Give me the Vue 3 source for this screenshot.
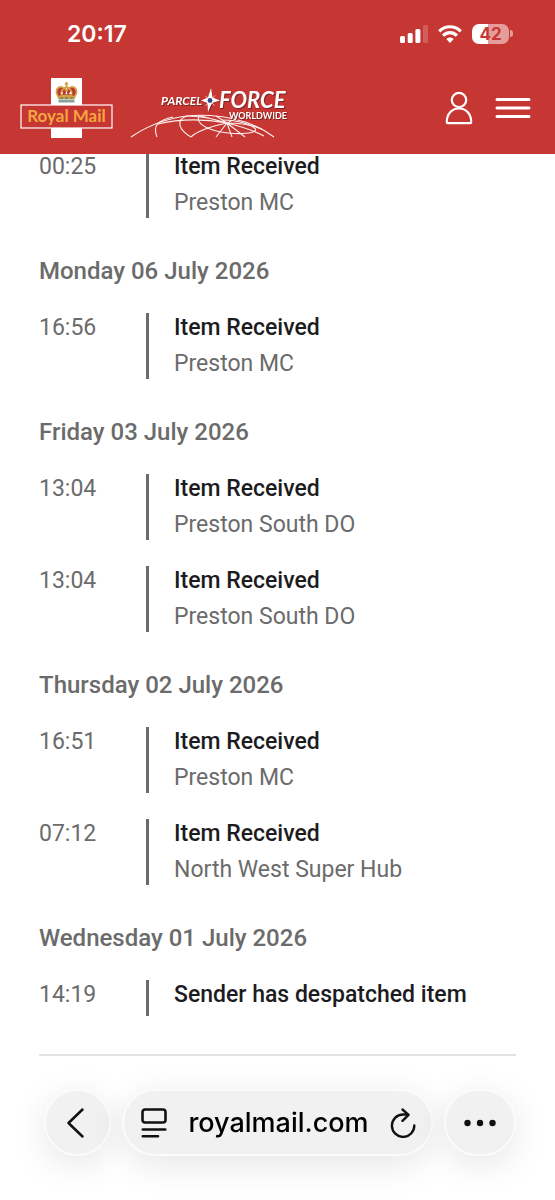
<template>
  <div class="page">
    <header class="header">
      <!-- Status bar -->
      <div class="status">
        <time class="clock">20:17</time>
        <div class="indicators">
          <svg class="signal" width="28" height="20" viewBox="0 0 28 20" fill="#fff" role="img" aria-label="Signal">
            <rect x="0" y="12" width="5" height="7" rx="1.5" />
            <rect x="7.700" y="9" width="5" height="10" rx="1.500" />
            <rect x="15.400" y="5" width="5" height="14" rx="1.500" />
            <rect x="23" y="1" width="5" height="18" rx="1.500" opacity="0.200" />
          </svg>
          <svg class="wifi" width="24" height="20" viewBox="1 0 24 20" fill="none" stroke="#fff" stroke-width="3.200" role="img" aria-label="Wi-Fi">
            <path d="M2.300 7.300C8.200 1.200 17.800 1.200 23.700 7.300" />
            <path d="M6.100 11.600c4-4 9.800-4 13.800 0" />
            <path d="M13 18.900l-3.700-3.800c2-2 5.400-2 7.400 0z" fill="#fff" stroke="none" />
          </svg>
          <div class="battery">
            <span class="battery-body">42</span>
            <span class="battery-tip"></span>
          </div>
        </div>
      </div>

      <!-- Site navigation -->
      <nav class="nav">
        <a class="logo-rm" href="#" aria-label="Royal Mail">
          <svg width="94" height="60" viewBox="0 0 94 60">
            <rect x="31" y="0" width="31" height="60" fill="#fff" />
            <rect x="1" y="27" width="91" height="23" fill="#c63632" stroke="#fff" stroke-width="1.200" />
            <!-- Crown -->
            <path d="M39 21C35 14 37 9 42 9c2 0 3 1 4.500 2C48 10 49 9 51 9c5 0 7 5 3 12z" fill="#b93a35" />
            <path d="M38.500 19C34 12 38 8 42 9q3 1 4.500 4Q48 10 51 9c4-1 8 3 3.500 10M42 18c-2-4 0-7 4.500-9 4.500 2 6.500 5 4.500 9" fill="none" stroke="#d6a044" stroke-width="1.700" />
            <path d="M46.500 4v5M44.800 6h3.400" stroke="#d39a36" stroke-width="1.600" />
            <path d="M38 18q8.500-3 17 0v3H38z" fill="#d6a044" />
            <path d="M38.500 21.500h16v3h-16z" fill="#8aa09a" />
            <path d="M41 16l1-3 1 3zm8 0l1.500-3 1.500 3zm-3.500 0l1-3 1 3z" fill="#fff" />
            <path d="M40 20h3m2 0h3m2 0h3" stroke="#357263" stroke-width="1" />
            <text class="rm-text" x="46.500" y="44" text-anchor="middle">Royal Mail</text>
          </svg>
        </a>
        <a class="logo-pf" href="#" aria-label="Parcelforce Worldwide">
          <svg width="162" height="60" viewBox="0 -4 162 60">
            <g fill="none" stroke="#fff" stroke-width="1.100" opacity="0.920">
              <path d="M3 55C28 38 56 32 82 33.500C108 35 130 43 146 55" />
              <path d="M29 55C24 43 31 38 45 35" />
              <path d="M63 55C51 48 47 38 59 34" />
              <path d="M71 33.500C67 43 83 50 106 51.500C121 52 130 50 127 46.500C121 41 107 38 95 38" />
              <path d="M99 41C77 37 55 36 30 42M99 41C87 37 73 34 58 34M99 41L71 33.500M99 41L88 34M99 41C80 45 68 50 63 55M99 41L88 55M99 41l5 14M99 41l18 14M99 41c16 4 28 8 37 13M99 41C112 41 124 43 134 47M99 41l8-4" />
            </g>
            <g class="pf-shadow">
              <text class="pf-parcel" x="33" y="23">PARCEL</text>
              <text class="pf-force" x="91" y="26">FORCE</text>
              <text class="pf-world" x="101" y="37">WORLDWIDE</text>
            </g>
            <path d="M83 8l2 8 7 3-7 2.500-4 9-1-9-6-2.500 7-3z" fill="#7e2523" />
            <path d="M83 6l1.500 9.500 7.500 3-8 2.500-4 9-.5-9-6.500-2.500 7-3z" fill="#fff" />
            <path d="M77.500 14l3 3M87 13.500l-3 3M77.500 23.500l3-3M86.500 23.500l-3-3" stroke="#fff" stroke-width="0.700" />
            <circle cx="82" cy="18.500" r="2.400" fill="#35458b" />
          </svg>
        </a>
        <div class="nav-actions">
          <button class="icon-btn" type="button" aria-label="Account">
            <svg width="28" height="34" viewBox="0 0 28 34" fill="none" stroke="#fff" stroke-width="2.200">
              <circle cx="14" cy="9" r="7.200" />
              <path d="M1.800 31.500C1.500 23 7 17.500 14 17.500s12.500 5.500 12.200 14q0 .7-.8.700H2.600q-.8 0-.8-.7z" />
            </svg>
          </button>
          <button class="icon-btn" type="button" aria-label="Menu">
            <svg width="36" height="34" viewBox="0 0 36 34" stroke="#fff" stroke-width="3" stroke-linecap="round">
              <path d="M2 8.500h32M2 17h32M2 25.500h32" />
            </svg>
          </button>
        </div>
      </nav>
    </header>

    <!-- Tracking history -->
    <main class="history">
      <section v-for="(day, i) in days" :key="i" class="day">
        <h2 v-if="day.date" class="day-title">{{ day.date }}</h2>
        <ol class="events">
          <li v-for="(event, j) in day.events" :key="j" class="event">
            <time class="event-time">{{ event.time }}</time>
            <div class="event-body">
              <p class="event-title">{{ event.title }}</p>
              <p v-if="event.place" class="event-place">{{ event.place }}</p>
            </div>
          </li>
        </ol>
      </section>
    </main>

    <!-- Browser toolbar -->
    <div class="toolbar">
      <button class="pill" type="button" aria-label="Back">
        <svg width="24" height="32" viewBox="0 0 24 32" fill="none" stroke="#111" stroke-width="2.500" stroke-linecap="round" stroke-linejoin="round">
          <path d="M16.500 2.500L2.500 16l14 13.500" />
        </svg>
      </button>
      <div class="pill address">
        <button class="icon-btn" type="button" aria-label="Page menu">
          <svg width="26" height="30" viewBox="0 0 26 30" fill="none" stroke="#111" stroke-width="2.600" stroke-linecap="round">
            <rect x="1.500" y="1.500" width="23" height="13" rx="2.500" />
            <path d="M1.800 21.500h22.500M1.800 28.300H17" />
          </svg>
        </button>
        <button class="url" type="button">royalmail.com</button>
        <button class="icon-btn" type="button" aria-label="Reload">
          <svg width="26" height="30" viewBox="0 0 26 30" fill="none" stroke="#111" stroke-width="2.400" stroke-linecap="round" stroke-linejoin="round">
            <path d="M24.300 17.500A11.200 11.200 0 1 1 13 6.500h5" />
            <path d="M12.500 1.500l6 5.300-6 6" />
          </svg>
        </button>
      </div>
      <button class="pill" type="button" aria-label="More">
        <svg width="32" height="8" viewBox="0 0 32 8" fill="#111">
          <circle cx="3.500" cy="4" r="3.200" />
          <circle cx="16" cy="4" r="3.200" />
          <circle cx="28.500" cy="4" r="3.200" />
        </svg>
      </button>
    </div>
  </div>
</template>

<script setup>
const days = [
  {
    date: '',
    events: [{ time: '00:25', title: 'Item Received', place: 'Preston MC' }]
  },
  {
    date: 'Monday 06 July 2026',
    events: [{ time: '16:56', title: 'Item Received', place: 'Preston MC' }]
  },
  {
    date: 'Friday 03 July 2026',
    events: [
      { time: '13:04', title: 'Item Received', place: 'Preston South DO' },
      { time: '13:04', title: 'Item Received', place: 'Preston South DO' }
    ]
  },
  {
    date: 'Thursday 02 July 2026',
    events: [
      { time: '16:51', title: 'Item Received', place: 'Preston MC' },
      { time: '07:12', title: 'Item Received', place: 'North West Super Hub' }
    ]
  },
  {
    date: 'Wednesday 01 July 2026',
    events: [{ time: '14:19', title: 'Sender has despatched item' }]
  }
]
</script>

<style>
body {
  background-color: #fff;
}
</style>

<style scoped>
.page {
  min-height: 100vh;
  background-color: #fff;
  color: #6b6b6b;
  font-family: Roboto, 'Liberation Sans', sans-serif;
  font-size: 23px;
  line-height: 30px;
}

button {
  margin: 0;
  padding: 0;
  border: 0;
  background: none;
  color: inherit;
  font: inherit;
  cursor: pointer;
}

svg {
  display: block;
}

/* Header */
.header {
  position: sticky;
  top: 0;
  z-index: 10;
  background-color: #c63632;
  color: #fff;
}

.status {
  display: flex;
  align-items: center;
  justify-content: space-between;
  height: 67px;
  padding: 0 42px 0 67px;
  font-family: Inter, sans-serif;
}

.clock {
  font-size: 23px;
  font-weight: 600;
}

.indicators {
  display: flex;
  align-items: center;
  gap: 10px;
}

.battery {
  display: flex;
  align-items: center;
  gap: 1px;
}

.battery-body {
  width: 37px;
  border-radius: 7px;
  background: linear-gradient(90deg, #fff 42%, #e49d9b 42%);
  color: #c63632;
  font-size: 17px;
  font-weight: 700;
  line-height: 20px;
  text-align: center;
}

.battery-tip {
  width: 3px;
  height: 7px;
  border-radius: 0 4px 4px 0;
  background-color: #e49d9b;
}

.nav {
  display: flex;
  align-items: center;
  height: 81px;
  padding: 0 24px 6px 20px;
}

.logo-pf {
  margin-left: 14px;
}

.nav-actions {
  display: flex;
  gap: 22px;
  margin-left: auto;
}

.icon-btn {
  display: flex;
}

.rm-text {
  fill: #f3a63f;
  font-family: Lato, sans-serif;
  font-size: 17px;
  font-weight: 700;
}

.pf-parcel,
.pf-force,
.pf-world {
  fill: #fff;
  font-family: Lato, sans-serif;
  font-weight: 700;
}

.pf-parcel {
  font-size: 12px;
  font-style: italic;
}

.pf-force {
  font-size: 22px;
  font-style: italic;
}

.pf-world {
  font-size: 9px;
}

.pf-shadow {
  filter: drop-shadow(1px 1px 0 #7e2523);
}

/* Tracking history */
.history {
  margin: -2px 39px 0;
  padding-bottom: 38px;
  border-bottom: 2px solid #e2e2e2;
}

.day-title {
  margin: 0;
  padding: 38px 0 27px;
  font-size: 24px;
  font-weight: 500;
}

.events {
  display: flex;
  flex-direction: column;
  gap: 26px;
  margin: 0;
  padding: 0;
  list-style: none;
}

.event {
  display: grid;
  grid-template-columns: 107px 1fr;
}

.event-body {
  padding-left: 25px;
  border-left: 3px solid #6b6b6b;
}

.event-title {
  margin: 0 0 6px;
  color: #1c1c1e;
  font-weight: 500;
}

.event-place {
  margin: 0;
}

/* Browser toolbar */
.toolbar {
  position: fixed;
  right: 39px;
  bottom: 44px;
  left: 44px;
  z-index: 10;
  display: grid;
  grid-template-columns: 67px 1fr 72px;
  gap: 11px;
  color: #000;
}

.pill {
  display: flex;
  align-items: center;
  justify-content: center;
  box-sizing: border-box;
  height: 67px;
  border: 2px solid #fbfbfb;
  border-radius: 34px;
  background-color: #f1f1f1;
  box-shadow: 0 8px 36px rgba(0, 0, 0, 0.1);
}

.address {
  justify-content: space-between;
  padding: 0 15px 0 17px;
}

.url {
  font-family: Inter, sans-serif;
  font-size: 27px;
  font-weight: 500;
}
</style>
